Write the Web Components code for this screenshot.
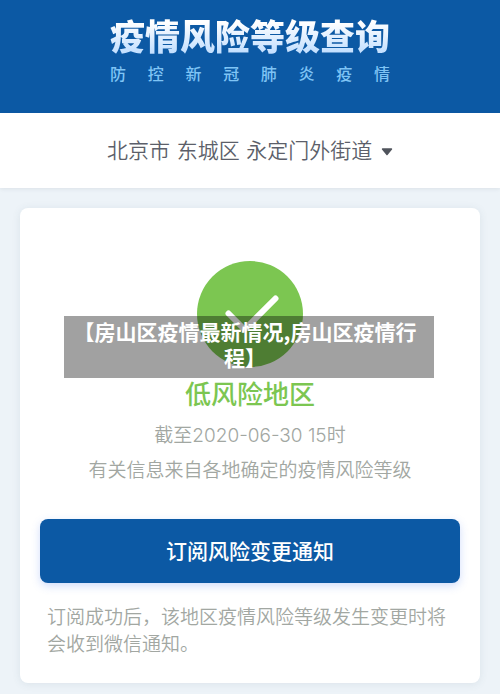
<!DOCTYPE html>
<html lang="zh-CN">
<head>
<meta charset="utf-8">
<meta name="viewport" content="width=device-width, initial-scale=1">
<title>疫情风险等级查询</title>
<style>
  body {
    margin: 0;
    background-color: #edf3f8;
    font-family: "Noto Sans CJK SC", sans-serif;
    color: #a2a7a2;
  }
</style>
</head>
<body>
<risk-page>
  <risk-header>
    疫情风险等级查询
    <span slot="subtitle">防控新冠肺炎疫情</span>
  </risk-header>
  <area-picker value="北京市 东城区 永定门外街道"></area-picker>
  <risk-card>
    <risk-status level="低风险地区">
      <span slot="time">截至2020-06-30 15时</span>
      <span slot="source">有关信息来自各地确定的疫情风险等级</span>
    </risk-status>
    <subscribe-button>订阅风险变更通知</subscribe-button>
    <span slot="note">订阅成功后，该地区疫情风险等级发生变更时将会收到微信通知。</span>
  </risk-card>
  <caption-banner slot="overlay">【房山区疫情最新情况,房山区疫情行程】</caption-banner>
</risk-page>

<script>
class RiskPage extends HTMLElement {
    constructor() {
        super();
        this.attachShadow({ mode: 'open' });
        this.shadowRoot.innerHTML = `
      <style>
        :host {
          display: block;
          position: relative;
        }

        main {
          display: flex;
          flex-direction: column;
          padding-bottom: 11px;
        }
      </style>
      <main><slot></slot></main>
      <slot name="overlay"></slot>
    `;
    }
}

class RiskHeader extends HTMLElement {
    constructor() {
        super();
        this.attachShadow({ mode: 'open' });
        this.shadowRoot.innerHTML = `
      <style>
        :host {
          display: flex;
          justify-content: center;
          padding: 14px 20px 28px;
          background-color: #0c59a4;
        }

        .titles {
          display: flex;
          flex-direction: column;
          gap: 6px;
        }

        h1 {
          margin: 0;
          font-size: 35px;
          line-height: 42px;
          font-weight: 900;
          color: transparent;
          background: linear-gradient(#ffffff 20%, #c4e0ff 90%);
          background-clip: text;
          -webkit-background-clip: text;
        }

        p {
          margin: 0;
          font-size: 16px;
          font-weight: 500;
          line-height: 23px;
          color: #7fc4f5;
          text-align: justify;
          text-align-last: justify;
        }
      </style>
      <div class="titles">
        <h1><slot></slot></h1>
        <p><slot name="subtitle"></slot></p>
      </div>
    `;
    }
}

class AreaPicker extends HTMLElement {
    constructor() {
        super();
        this.attachShadow({ mode: 'open' });
        this.shadowRoot.innerHTML = `
      <style>
        :host {
          display: flex;
          justify-content: center;
          padding: 21px 20px 19px;
          background-color: #ffffff;
          box-shadow: 0 1px 4px rgba(60, 80, 90, 0.1);
        }

        label {
          display: flex;
          align-items: center;
          gap: 8px;
        }

        select {
          appearance: none;
          margin: 0;
          padding: 0;
          border: 0;
          background: none;
          font-family: "DejaVu Sans", "Noto Sans CJK SC", sans-serif;
          font-size: 21px;
          font-weight: 350;
          line-height: 35px;
          height: 35px;
          color: #5c5f6a;
        }

        svg {
          display: block;
        }
      </style>
      <label>
        <select aria-label="选择地区"><option></option></select>
        <svg width="12" height="8" viewBox="0 0 12 8" aria-hidden="true">
          <path d="M1.5 1h9L6 6.6z" fill="#50545c" stroke="#50545c" stroke-width="1.4" stroke-linejoin="round"/>
        </svg>
      </label>
    `;
    }

    connectedCallback() {
        this.shadowRoot.querySelector('option').textContent = this.getAttribute('value');
    }
}

class RiskCard extends HTMLElement {
    constructor() {
        super();
        this.attachShadow({ mode: 'open' });
        this.shadowRoot.innerHTML = `
      <style>
        :host {
          display: flex;
          flex-direction: column;
          margin: 20px 20px 0;
          padding: 53px 20px 27px;
          border-radius: 8px;
          background-color: #ffffff;
          box-shadow: 0 1px 8px rgba(60, 90, 110, 0.1);
        }

        p {
          margin: 19px 0 0;
          padding: 0 7px;
          font-size: 19px;
          font-weight: 350;
          line-height: 27px;
        }
      </style>
      <slot></slot>
      <p><slot name="note"></slot></p>
    `;
    }
}

class RiskStatus extends HTMLElement {
    constructor() {
        super();
        this.attachShadow({ mode: 'open' });
        this.shadowRoot.innerHTML = `
      <style>
        :host {
          display: flex;
          flex-direction: column;
          align-items: center;
          text-align: center;
        }

        svg {
          display: block;
        }

        h2 {
          margin: 8px 0;
          font-size: 26px;
          line-height: 36px;
          font-weight: 500;
          color: #7cc651;
        }

        p {
          margin: 0;
          font-size: 19px;
          font-weight: 350;
          line-height: 33px;
        }

        .time {
          font-family: Inter, "Noto Sans CJK SC", sans-serif;
        }
      </style>
      <svg width="106" height="106" viewBox="0 0 106 106" aria-hidden="true">
        <circle cx="53" cy="53" r="53" fill="#7cc651"/>
        <path d="M31.5 52.5l16 16L78.5 37.5" fill="none" stroke="#ffffff" stroke-width="6" stroke-linecap="round" stroke-linejoin="round"/>
      </svg>
      <h2></h2>
      <p class="time"><slot name="time"></slot></p>
      <p><slot name="source"></slot></p>
    `;
    }

    connectedCallback() {
        this.shadowRoot.querySelector('h2').textContent = this.getAttribute('level');
    }
}

class SubscribeButton extends HTMLElement {
    constructor() {
        super();
        this.attachShadow({ mode: 'open' });
        this.shadowRoot.innerHTML = `
      <style>
        :host {
          display: block;
          margin-top: 34px;
        }

        button {
          display: block;
          width: 100%;
          padding: 15px 16px 17px;
          border: 0;
          border-radius: 8px;
          background-color: #0c59a4;
          box-shadow: 0 3px 8px rgba(70, 120, 240, 0.25);
          color: #ffffff;
          font: inherit;
          font-size: 21px;
          font-weight: 500;
          line-height: 32px;
          cursor: pointer;
        }
      </style>
      <button type="button"><slot></slot></button>
    `;
    }
}

class CaptionBanner extends HTMLElement {
    constructor() {
        super();
        this.attachShadow({ mode: 'open' });
        this.shadowRoot.innerHTML = `
      <style>
        :host {
          position: absolute;
          top: 316px;
          left: 64px;
          right: 66px;
          padding: 2px 16px 8px 8px;
          box-sizing: border-box;
          background-color: rgba(0, 0, 0, 0.37);
          color: #ffffff;
          font-size: 21px;
          font-weight: 700;
          line-height: 26px;
          text-align: center;
        }
      </style>
      <slot></slot>
    `;
    }
}

customElements.define('risk-page', RiskPage);
customElements.define('risk-header', RiskHeader);
customElements.define('area-picker', AreaPicker);
customElements.define('risk-card', RiskCard);
customElements.define('risk-status', RiskStatus);
customElements.define('subscribe-button', SubscribeButton);
customElements.define('caption-banner', CaptionBanner);
</script>
</body>
</html>
